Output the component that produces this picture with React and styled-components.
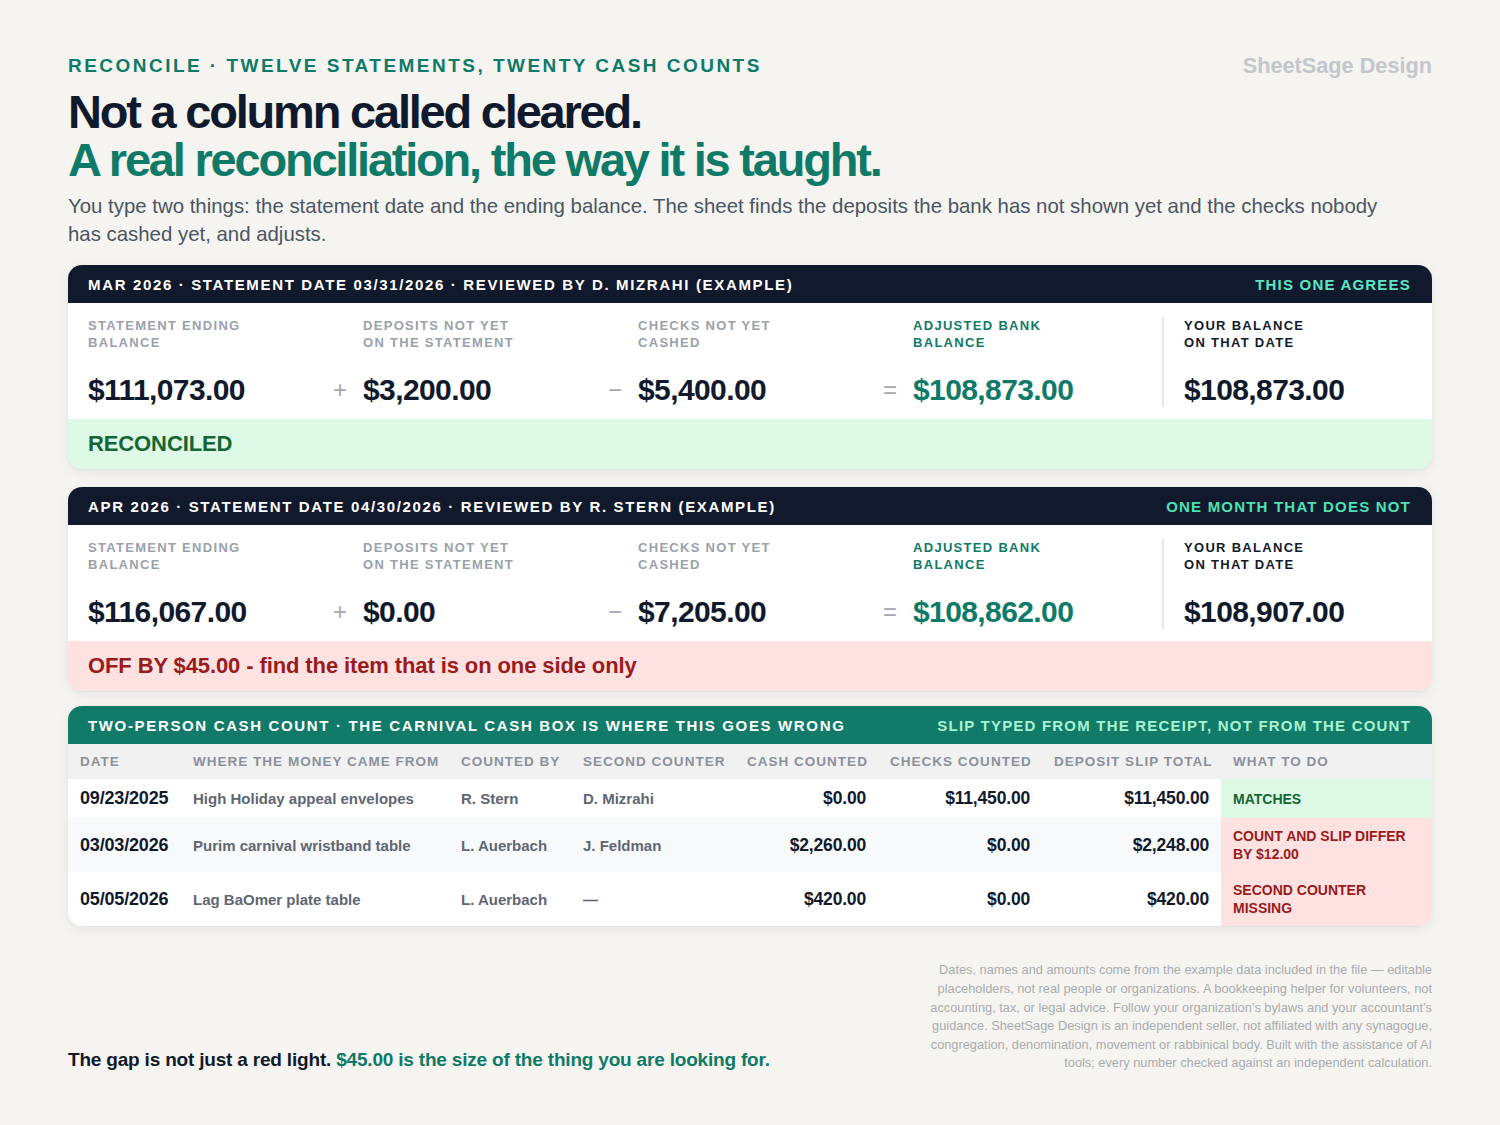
import React from 'react';
import styled, { createGlobalStyle } from 'styled-components';

const NAVY = '#111a2c';
const TEAL = '#0f7a67';
const GREEN_BG = '#dcfae6';
const GREEN_TX = '#166534';
const RED_BG = '#fee2e2';
const RED_TX = '#991b1b';

const Global = createGlobalStyle`
  html, body { margin: 0; padding: 0; background: #f5f4f0; }
  body {
    font-family: "Liberation Sans", Arial, Helvetica, sans-serif;
    color: ${NAVY};
    -webkit-font-smoothing: antialiased;
  }
  * { box-sizing: border-box; }
`;

const Page = styled.main`
  width: 1500px;
  min-height: 1125px;
  padding: 54px 68px 52px;
  display: flex;
  flex-direction: column;
`;

const TopRow = styled.div`
  display: flex;
  justify-content: space-between;
  align-items: center;
`;

const Eyebrow = styled.div`
  font-size: 19px;
  font-weight: 700;
  letter-spacing: 0.13em;
  line-height: 24px;
  color: ${TEAL};
`;

const Brand = styled.div`
  font-size: 21.7px;
  font-weight: 700;
  line-height: 24px;
  color: #c3c6cb;
`;

const Title = styled.h1`
  margin: 10px 0 0;
  font-size: 47px;
  line-height: 48px;
  font-weight: 700;
  letter-spacing: -0.047em;
  color: ${NAVY};
`;

const TitleAccent = styled.span`
  display: block;
  color: ${TEAL};
`;

const Lede = styled.p`
  margin: 8px 0 0;
  max-width: 1340px;
  font-size: 20.4px;
  line-height: 28px;
  color: #4b5563;
`;

const Card = styled.section`
  margin-top: ${p => p.$space}px;
  background: #fff;
  border-radius: 14px;
  overflow: hidden;
  box-shadow: 0 3px 12px rgba(17, 26, 44, 0.07), 0 1px 2px rgba(17, 26, 44, 0.04);
`;

const CardHead = styled.header`
  display: flex;
  justify-content: space-between;
  align-items: center;
  height: 38px;
  padding: 0 21px 0 20px;
  background: ${p => (p.$tone === 'teal' ? '#127a68' : NAVY)};
  color: #fff;
  font-size: 15px;
  font-weight: 700;
  letter-spacing: 0.11em;
  text-transform: uppercase;
`;

const HeadNote = styled.span`
  color: ${p => p.$color};
  letter-spacing: 0.08em;
`;

const Figures = styled.div`
  display: grid;
  grid-template-columns: 239px 36px 239px 36px 239px 36px 249px 2px 1fr;
  grid-template-rows: auto auto;
  padding: 14px 20px 11px;
`;

const Label = styled.div`
  grid-column: ${p => p.$col};
  grid-row: 1;
  font-size: 13px;
  font-weight: 700;
  line-height: 17px;
  letter-spacing: 0.1em;
  text-transform: uppercase;
  color: ${p => p.$color || '#9aa1ab'};
  padding-left: ${p => (p.$last ? '20px' : '0')};
`;

const Value = styled.div`
  grid-column: ${p => p.$col};
  grid-row: 2;
  margin-top: 21px;
  font-size: 30px;
  font-weight: 700;
  line-height: 36px;
  letter-spacing: -0.02em;
  color: ${p => p.$color || NAVY};
  padding-left: ${p => (p.$last ? '20px' : '0')};
`;

const Op = styled.div`
  grid-column: ${p => p.$col};
  grid-row: 2;
  margin-top: 21px;
  padding-right: 10px;
  text-align: center;
  font-size: 24px;
  line-height: 36px;
  color: #a3a8af;
`;

const Divider = styled.div`
  grid-column: 8;
  grid-row: 1 / span 2;
  background: #e5e7ea;
  margin: 0 0 1px;
`;

const Band = styled.div`
  display: flex;
  align-items: center;
  height: 50px;
  padding: 0 20px;
  background: ${p => (p.$ok ? GREEN_BG : RED_BG)};
  color: ${p => (p.$ok ? GREEN_TX : RED_TX)};
  font-size: 22px;
  font-weight: 700;
  letter-spacing: -0.005em;
`;

const Table = styled.table`
  width: 100%;
  border-collapse: collapse;
  table-layout: fixed;
`;

const Th = styled.th`
  height: 35px;
  padding: 0 12px;
  background: #f1f1f1;
  font-size: 13.5px;
  font-weight: 700;
  letter-spacing: 0.075em;
  color: #8b9099;
  text-align: ${p => p.$align || 'left'};
  white-space: nowrap;
`;

const Tr = styled.tr`
  background: ${p => (p.$alt ? '#f8f9fb' : '#fff')};
  & + & > td { border-top: 2px solid #ebecee; }
`;

const Td = styled.td`
  padding: 9px 12px;
  line-height: 21px;
  font-size: ${p => (p.$kind === 'text' ? '15px' : p.$kind === 'date' ? '18px' : '17.5px')};
  font-weight: 700;
  letter-spacing: ${p => (p.$kind === 'text' ? '0' : '-0.01em')};
  color: ${p => (p.$kind === 'text' ? '#5f6673' : NAVY)};
  text-align: ${p => (p.$kind === 'num' ? 'right' : 'left')};
  white-space: nowrap;
`;

const StatusTd = styled.td`
  padding: 9px 12px;
  background: ${p => (p.$ok ? GREEN_BG : RED_BG)};
  color: ${p => (p.$ok ? GREEN_TX : RED_TX)};
  font-size: 14px;
  font-weight: 700;
  line-height: 18px;
  text-transform: uppercase;
  vertical-align: middle;
`;

const Footer = styled.footer`
  margin-top: auto;
  display: flex;
  justify-content: space-between;
  align-items: flex-end;
`;

const Closing = styled.p`
  margin: 0;
  font-size: 19px;
  font-weight: 700;
  line-height: 26px;
  letter-spacing: -0.01em;
  color: ${NAVY};
`;

const ClosingAccent = styled.span`
  color: ${TEAL};
`;

const Fine = styled.p`
  margin: 0;
  width: 516px;
  font-size: 12.8px;
  line-height: 18.6px;
  text-align: right;
  color: #a9abaf;
`;

const months = [
  {
    head: 'Mar 2026 · Statement date 03/31/2026 · Reviewed by D. Mizrahi (example)',
    note: 'This one agrees',
    values: ['$111,073.00', '$3,200.00', '$5,400.00', '$108,873.00', '$108,873.00'],
    ok: true,
    status: 'RECONCILED',
    space: 17,
  },
  {
    head: 'Apr 2026 · Statement date 04/30/2026 · Reviewed by R. Stern (example)',
    note: 'One month that does not',
    values: ['$116,067.00', '$0.00', '$7,205.00', '$108,862.00', '$108,907.00'],
    ok: false,
    status: 'OFF BY $45.00 - find the item that is on one side only',
    space: 18,
  },
];

const labels = [
  ['Statement ending', 'balance'],
  ['Deposits not yet', 'on the statement'],
  ['Checks not yet', 'cashed'],
  ['Adjusted bank', 'balance'],
  ['Your balance', 'on that date'],
];

const Lines = ({ lines }) => (
  <>
    {lines[0]}
    <br />
    {lines[1]}
  </>
);

function MonthCard({ m }) {
  return (
    <Card $space={m.space}>
      <CardHead>
        <span>{m.head}</span>
        <HeadNote $color={m.ok ? '#5ee6c4' : '#4fe0b4'}>{m.note}</HeadNote>
      </CardHead>
      <Figures>
        <Label $col={1}><Lines lines={labels[0]} /></Label>
        <Label $col={3}><Lines lines={labels[1]} /></Label>
        <Label $col={5}><Lines lines={labels[2]} /></Label>
        <Label $col={7} $color={TEAL}><Lines lines={labels[3]} /></Label>
        <Divider />
        <Label $col={9} $color={NAVY} $last><Lines lines={labels[4]} /></Label>

        <Value $col={1}>{m.values[0]}</Value>
        <Op $col={2}>+</Op>
        <Value $col={3}>{m.values[1]}</Value>
        <Op $col={4}>−</Op>
        <Value $col={5}>{m.values[2]}</Value>
        <Op $col={6}>=</Op>
        <Value $col={7} $color={TEAL}>{m.values[3]}</Value>
        <Value $col={9} $last>{m.values[4]}</Value>
      </Figures>
      <Band $ok={m.ok}>{m.status}</Band>
    </Card>
  );
}

const counts = [
  ['09/23/2025', 'High Holiday appeal envelopes', 'R. Stern', 'D. Mizrahi', '$0.00', '$11,450.00', '$11,450.00', 'Matches', true],
  ['03/03/2026', 'Purim carnival wristband table', 'L. Auerbach', 'J. Feldman', '$2,260.00', '$0.00', '$2,248.00', 'Count and slip differ by $12.00', false],
  ['05/05/2026', 'Lag BaOmer plate table', 'L. Auerbach', '—', '$420.00', '$0.00', '$420.00', 'Second counter missing', false],
];

const cols = [
  ['Date', 113, 'left'],
  ['Where the money came from', 268, 'left'],
  ['Counted by', 122, 'left'],
  ['Second counter', 164, 'left'],
  ['Cash counted', 143, 'right'],
  ['Checks counted', 164, 'right'],
  ['Deposit slip total', 179, 'right'],
  ['What to do', 211, 'left'],
];

function CountCard() {
  return (
    <Card $space={15}>
      <CardHead $tone="teal">
        <span>Two-person cash count · The carnival cash box is where this goes wrong</span>
        <HeadNote $color="#a7f3d0">Slip typed from the receipt, not from the count</HeadNote>
      </CardHead>
      <Table>
        <colgroup>
          {cols.map(c => (
            <col key={c[0]} style={{ width: c[1] }} />
          ))}
        </colgroup>
        <thead>
          <tr>
            {cols.map(c => (
              <Th key={c[0]} $align={c[2]}>{c[0].toUpperCase()}</Th>
            ))}
          </tr>
        </thead>
        <tbody>
          {counts.map((r, i) => (
            <Tr key={r[0]} $alt={i === 1}>
              <Td $kind="date">{r[0]}</Td>
              <Td $kind="text">{r[1]}</Td>
              <Td $kind="text">{r[2]}</Td>
              <Td $kind="text">{r[3]}</Td>
              <Td $kind="num">{r[4]}</Td>
              <Td $kind="num">{r[5]}</Td>
              <Td $kind="num">{r[6]}</Td>
              <StatusTd $ok={r[8]}>{r[7]}</StatusTd>
            </Tr>
          ))}
        </tbody>
      </Table>
    </Card>
  );
}

export default function App() {
  return (
    <>
      <Global />
      <Page>
        <TopRow>
          <Eyebrow>RECONCILE · TWELVE STATEMENTS, TWENTY CASH COUNTS</Eyebrow>
          <Brand>SheetSage Design</Brand>
        </TopRow>
        <Title>
          Not a column called cleared.
          <TitleAccent>A real reconciliation, the way it is taught.</TitleAccent>
        </Title>
        <Lede>
          You type two things: the statement date and the ending balance. The sheet finds the deposits the bank has
          not shown yet and the checks nobody has cashed yet, and adjusts.
        </Lede>
        {months.map(m => (
          <MonthCard key={m.head} m={m} />
        ))}
        <CountCard />
        <Footer>
          <Closing>
            The gap is not just a red light. <ClosingAccent>$45.00 is the size of the thing you are looking for.</ClosingAccent>
          </Closing>
          <Fine>
            Dates, names and amounts come from the example data included in the file — editable placeholders, not real
            people or organizations. A bookkeeping helper for volunteers, not accounting, tax, or legal advice. Follow
            your organization’s bylaws and your accountant’s guidance. SheetSage Design is an independent seller, not
            affiliated with any synagogue, congregation, denomination, movement or rabbinical body. Built with the
            assistance of AI tools; every number checked against an independent calculation.
          </Fine>
        </Footer>
      </Page>
    </>
  );
}
